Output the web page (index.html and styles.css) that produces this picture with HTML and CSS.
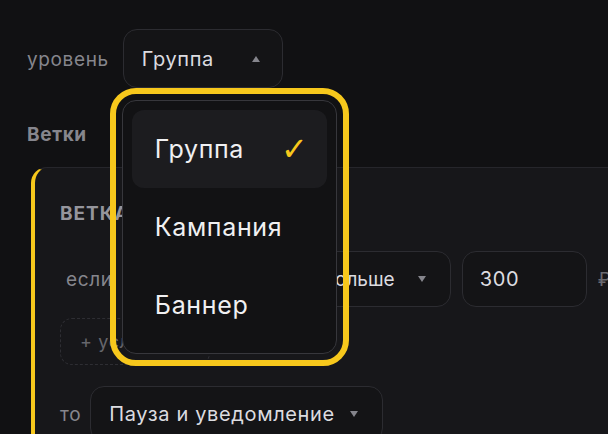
FILE: index.html
```html
<!DOCTYPE html>
<html lang="ru">
<head>
    <meta charset="UTF-8">
    <title>Правила</title>
    <link rel="stylesheet" href="styles.css">
</head>
<body>
    <div class="page">
        <div class="level-row">
            <span class="label">уровень</span>
            <div class="select-wrap">
                <div class="select select-level">
                    <span>Группа</span>
                    <span class="caret caret-up"></span>
                </div>
                <div class="menu">
                    <div class="menu-item active">
                        <span>Группа</span>
                        <span class="check">✓</span>
                    </div>
                    <div class="menu-item"><span>Кампания</span></div>
                    <div class="menu-item"><span>Баннер</span></div>
                </div>
            </div>
        </div>

        <h2 class="section-title">Ветки</h2>

        <div class="card">
            <div class="card-title">Ветка 1</div>

            <div class="row cond-row">
                <span class="label">если</span>
                <div class="select select-metric">
                    <span>Расход</span>
                    <span class="caret"></span>
                </div>
                <div class="select select-op">
                    <span>больше</span>
                    <span class="caret"></span>
                </div>
                <div class="input">300</div>
                <span class="unit">₽</span>
            </div>

            <div class="add-cond">+ условие</div>

            <div class="row action-row">
                <span class="label">то</span>
                <div class="select select-action">
                    <span>Пауза и уведомление</span>
                    <span class="caret"></span>
                </div>
            </div>
        </div>
    </div>
</body>
</html>
```

FILE: styles.css
```css
html, body {
    margin: 0;
    padding: 0;
    overflow: hidden;
}

body {
    background-color: #111113;
    color: #dcdce0;
    font-family: Inter, "Noto Sans", sans-serif;
    letter-spacing: 0.04em;
}

.page {
    padding: 29px 0 0 27px;
}

.label {
    font-size: 19px;
    color: #86868d;
}

.level-row {
    display: flex;
    align-items: center;
    gap: 14px;
}

.level-row .label {
    padding-top: 2px;
}

.select-wrap {
    position: relative;
}

.select {
    box-sizing: border-box;
    height: 59px;
    display: flex;
    align-items: center;
    justify-content: space-between;
    padding: 0 22px 0 18px;
    border: 1px solid #2c2c31;
    border-radius: 14px;
    background-color: #141416;
    font-size: 20px;
    color: #dcdce0;
}

.select-level {
    width: 160px;
}

.caret {
    flex-shrink: 0;
    width: 0;
    height: 0;
    border-left: 4px solid transparent;
    border-right: 4px solid transparent;
    border-top: 6px solid #85858c;
}

.caret-up {
    border-top: none;
    border-bottom: 6px solid #85858c;
}

/* dropdown */
.menu {
    position: absolute;
    top: 71px;
    left: -1px;
    z-index: 10;
    box-sizing: border-box;
    width: 215px;
    height: 254px;
    padding: 9px;
    border: 1px solid #37373c;
    border-radius: 14px;
    background-color: #121214;
    outline: 6px solid #f7c81c;
    outline-offset: 6px;
}

.menu-item {
    height: 78px;
    display: flex;
    align-items: center;
    justify-content: space-between;
    padding: 0 19px 0 23px;
    border-radius: 12px;
    font-size: 25px;
    color: #f0f0f2;
}

.menu-item.active {
    background-color: #1c1c1f;
}

.check {
    font-family: "DejaVu Sans", sans-serif;
    font-size: 32px;
    letter-spacing: 0;
    color: #f7c81c;
}

.section-title {
    margin: 35px 0 0 0;
    font-size: 19px;
    font-weight: 700;
    color: #86868d;
}

/* branch card */
.card {
    box-sizing: border-box;
    width: 640px;
    height: 320px;
    margin: 21px 0 0 4px;
    padding: 34px 0 0 25px;
    border-left: 4px solid #f7c81c;
    border-top: 1px solid #26262b;
    border-top-left-radius: 16px;
    background-color: #17171a;
}

.card-title {
    font-size: 19px;
    font-weight: 700;
    letter-spacing: 1px;
    text-transform: uppercase;
    color: #95959c;
}

.row {
    display: flex;
    align-items: center;
    gap: 11px;
}

.cond-row {
    margin-top: 26px;
    padding-left: 6px;
}

.cond-row .select,
.input {
    height: 56px;
}

.select-metric {
    width: 185px;
}

.select-op {
    width: 131px;
    justify-content: flex-end;
    gap: 23px;
    padding-right: 24px;
    font-size: 19px;
    letter-spacing: 0;
}

.input {
    box-sizing: border-box;
    width: 125px;
    display: flex;
    align-items: center;
    padding-left: 17px;
    border: 1px solid #2c2c31;
    border-radius: 14px;
    background-color: #141416;
    font-size: 20px;
    color: #dcdce0;
}

.unit {
    font-size: 19px;
    color: #6a6a70;
}

.add-cond {
    box-sizing: border-box;
    width: 150px;
    height: 47px;
    display: flex;
    align-items: center;
    margin-top: 11px;
    padding-left: 19px;
    border: 1.5px dashed #2e2e33;
    border-radius: 12px;
    font-size: 18px;
    color: #66666c;
}

.action-row {
    margin-top: 21px;
    gap: 9px;
}

.select-action {
    width: 293px;
    height: 56px;
    padding-right: 24px;
}
```
